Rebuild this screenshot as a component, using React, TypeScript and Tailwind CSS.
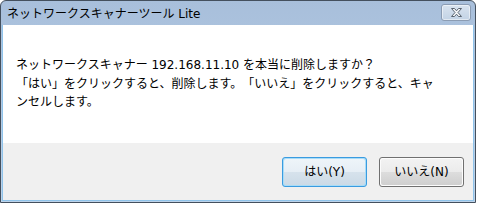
import React from "react";

const font = { fontFamily: '"DejaVu Sans", "Noto Sans CJK JP", sans-serif' };

function CloseGlyph() {
  return (
    <svg width="13" height="11" viewBox="0 0 13 11">
      <path
        d="M1.5 1.5 H4.5 L6.5 3.8 L8.5 1.5 H11.5 L8 5.5 L11.5 9.5 H8.5 L6.5 7.2 L4.5 9.5 H1.5 L5 5.5 Z"
        fill="#f4f6f8"
        stroke="#5a6470"
        strokeWidth="1"
        strokeLinejoin="round"
      />
    </svg>
  );
}

export default function App() {
  return (
    <div className="w-[477px] h-[204px] bg-white [text-spacing-trim:space-all]" style={font}>
      <div className="w-[476px] h-[203px] rounded-t-[6px] border border-[#44505e] bg-gradient-to-b from-[#a8bfdb] to-[#bdd3ea] flex flex-col overflow-hidden">
        <div className="h-[24px] flex items-center justify-between pl-[6px] pr-[4px] shrink-0">
          <span className="text-[12px] leading-none text-black pt-[2px]">
            ネットワークスキャナーツール Lite
          </span>
          <div className="w-[30px] h-[17px] mt-[-1px] rounded-[3px] border border-[#8b9cb3] bg-gradient-to-b from-[#d8e3ef] to-[#c3d3e5] flex items-center justify-center shadow-[inset_0_0_0_1px_rgba(255,255,255,0.5)]">
            <CloseGlyph />
          </div>
        </div>
        <div className="flex-1 flex flex-col mx-[1px] mb-[1px] border-l border-r border-b border-[#8fc3ea] bg-white">
          <div className="h-[118px] pt-[31px] pl-[13px] text-[12px] leading-[18.5px] text-black">
            <div>ネットワークスキャナー 192.168.11.10 を本当に削除しますか？</div>
            <div>「はい」をクリックすると、削除します。「いいえ」をクリックすると、キャ</div>
            <div>ンセルします。</div>
          </div>
          <div className="flex-1 bg-[#f0f0f0] flex justify-end items-start pt-[14px] pr-[9px] gap-[12px]">
            <div className="w-[85px] h-[30px] rounded-[3px] border border-[#3a9be0] p-[1px] bg-[#a8dcf7]">
              <div className="w-full h-full rounded-[2px] bg-[linear-gradient(to_bottom,#eef4f9_0%,#e6eef5_50%,#d6e2ec_51%,#ccdae6_100%)] flex items-center justify-center text-[12px] text-black">
                はい(Y)
              </div>
            </div>
            <div className="w-[85px] h-[30px] rounded-[3px] border border-[#707070] p-[1px] bg-[#fcfcfc]">
              <div className="w-full h-full rounded-[2px] bg-[linear-gradient(to_bottom,#f2f2f2_0%,#ebebeb_50%,#dddddd_51%,#cfcfcf_100%)] flex items-center justify-center text-[12px] text-black">
                いいえ(N)
              </div>
            </div>
          </div>
        </div>
      </div>
    </div>
  );
}
